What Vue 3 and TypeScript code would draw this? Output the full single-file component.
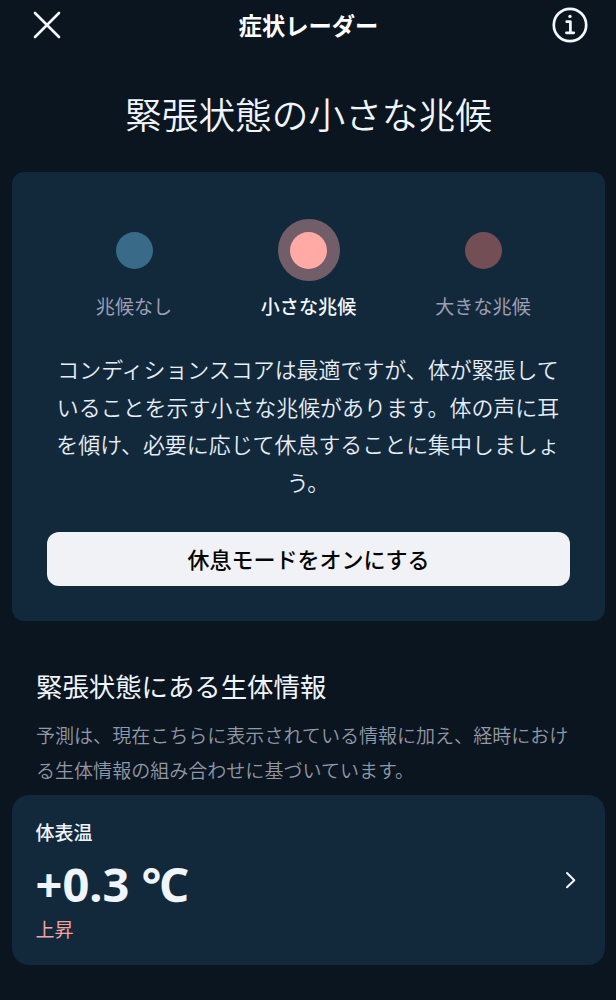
<script setup lang="ts">
interface Level {
  label: string
  tone: 'none' | 'minor' | 'major'
  active: boolean
}

const levels: Level[] = [
  { label: '兆候なし', tone: 'none', active: false },
  { label: '小さな兆候', tone: 'minor', active: true },
  { label: '大きな兆候', tone: 'major', active: false },
]
</script>

<template>
  <main class="screen">
    <header class="bar">
      <button class="icon-button" aria-label="閉じる">
        <svg width="36" height="36" viewBox="0 0 36 36" fill="none" stroke="#f4f7fd" stroke-width="2.6" stroke-linecap="round">
          <path d="M6 6 30 30M30 6 6 30" />
        </svg>
      </button>
      <h1 class="bar-title">症状レーダー</h1>
      <button class="icon-button" aria-label="情報">
        <svg width="36" height="36" viewBox="0 0 36 36" fill="none" stroke="#f4f7fd">
          <circle cx="18" cy="18" r="16.2" stroke-width="2.7" />
          <circle cx="18" cy="9.4" r="1.7" fill="#f4f7fd" stroke="none" />
          <path d="M14.7 14.7H18.4V25.6M14.4 25.8H21.8" stroke-width="2.7" stroke-linecap="round" stroke-linejoin="round" />
        </svg>
      </button>
    </header>

    <h2 class="headline">緊張状態の小さな兆候</h2>

    <section class="card status">
      <ul class="levels">
        <li v-for="level in levels" :key="level.tone" class="level" :class="[level.tone, { active: level.active }]">
          <span class="ring"><span class="dot"></span></span>
          <span class="level-label">{{ level.label }}</span>
        </li>
      </ul>
      <p class="message">コンディションスコアは最適ですが、体が緊張していることを示す小さな兆候があります。体の声に耳を傾け、必要に応じて休息することに集中しましょう。</p>
      <button class="rest">休息モードをオンにする</button>
    </section>

    <section class="intro">
      <h3 class="section-title">緊張状態にある生体情報</h3>
      <p class="description">予測は、現在こちらに表示されている情報に加え、経時における生体情報の組み合わせに基づいています。</p>
    </section>

    <section class="card metric">
      <div class="metric-body">
        <span class="metric-name">体表温</span>
        <span class="metric-value">+0.3 ℃</span>
        <span class="metric-trend">上昇</span>
      </div>
      <svg class="chevron" width="12" height="20" viewBox="0 0 12 20" fill="none" stroke="#f4f7fd" stroke-width="2" stroke-linecap="round" stroke-linejoin="round">
        <path d="M2 3 9.3 10.2 2 17.3" />
      </svg>
    </section>
  </main>
</template>

<style>
body {
  background: #0a1520;
}
</style>

<style scoped>
.screen {
  box-sizing: border-box;
  height: 1000px;
  padding: 0 11px 0 12px;
  overflow: hidden;
  background: #0a1520;
  color: #f0f4fb;
  font-family: "Noto Sans CJK JP", sans-serif;
}
h1, h2, h3, p, ul {
  margin: 0;
  padding: 0;
}
button {
  border: 0;
  padding: 0;
  font-family: inherit;
}
.bar {
  display: flex;
  justify-content: space-between;
  align-items: center;
  height: 50px;
  padding: 0 17px;
}
.icon-button {
  display: flex;
  background: none;
}
.bar-title {
  font-size: 23.3px;
  line-height: 34px;
  font-weight: 700;
  color: #fff;
}
.headline {
  margin-top: 36px;
  height: 86px;
  font-size: 36.7px;
  line-height: 54px;
  font-weight: 350;
  text-align: center;
  white-space: nowrap;
}
.card {
  box-sizing: border-box;
  background: #12293c;
}
.status {
  height: 449px;
  padding: 47px 35px 0;
  border-radius: 12px;
}
.levels {
  display: grid;
  grid-template-columns: repeat(3, 174.5px);
  justify-content: center;
  list-style: none;
}
.level {
  display: flex;
  flex-direction: column;
  align-items: center;
}
.ring {
  display: flex;
  align-items: center;
  justify-content: center;
  width: 62px;
  height: 62px;
  border-radius: 50%;
}
.dot {
  width: 37px;
  height: 37px;
  border-radius: 50%;
}
.none .dot {
  background: #396a88;
}
.minor .ring {
  background: #725e69;
}
.minor .dot {
  background: #ffaaa4;
}
.major .dot {
  background: #744e55;
}
.level-label {
  margin-top: 10px;
  font-size: 19.1px;
  line-height: 30px;
  font-weight: 400;
  color: #9b9eb3;
}
.active .level-label {
  font-weight: 500;
  color: #f4f7fd;
}
.message {
  width: 506px;
  margin: 29px -1px 0 8px;
  font-size: 21.95px;
  line-height: 37.5px;
  font-weight: 350;
  text-align: center;
  color: #e6edf6;
}
.rest {
  box-sizing: border-box;
  display: block;
  width: 523px;
  height: 54px;
  margin-top: 32px;
  padding-bottom: 2px;
  border-radius: 12px;
  background: #f1f2f5;
  color: #050505;
  font-size: 22px;
  line-height: 52px;
  font-weight: 500;
}
.intro {
  height: 174px;
  box-sizing: border-box;
  padding: 45px 24px 0;
}
.section-title {
  font-size: 26.4px;
  line-height: 40px;
  font-weight: 400;
}
.description {
  width: 536px;
  margin-top: 12px;
  font-size: 19.05px;
  line-height: 34.5px;
  font-weight: 350;
  color: #9298a5;
}
.metric {
  display: flex;
  align-items: center;
  justify-content: space-between;
  height: 170px;
  padding: 0 28px 0 23.5px;
  border-radius: 17px;
}
.metric-body {
  display: flex;
  flex-direction: column;
}
.metric-name {
  font-size: 19px;
  line-height: 28px;
  font-weight: 500;
}
.metric-value {
  margin-top: 7px;
  font-family: "Noto Sans", sans-serif;
  font-size: 47px;
  line-height: 62px;
  font-weight: 700;
}
.metric-trend {
  font-size: 19px;
  line-height: 28px;
  font-weight: 400;
  color: #f4a3a3;
}
</style>
